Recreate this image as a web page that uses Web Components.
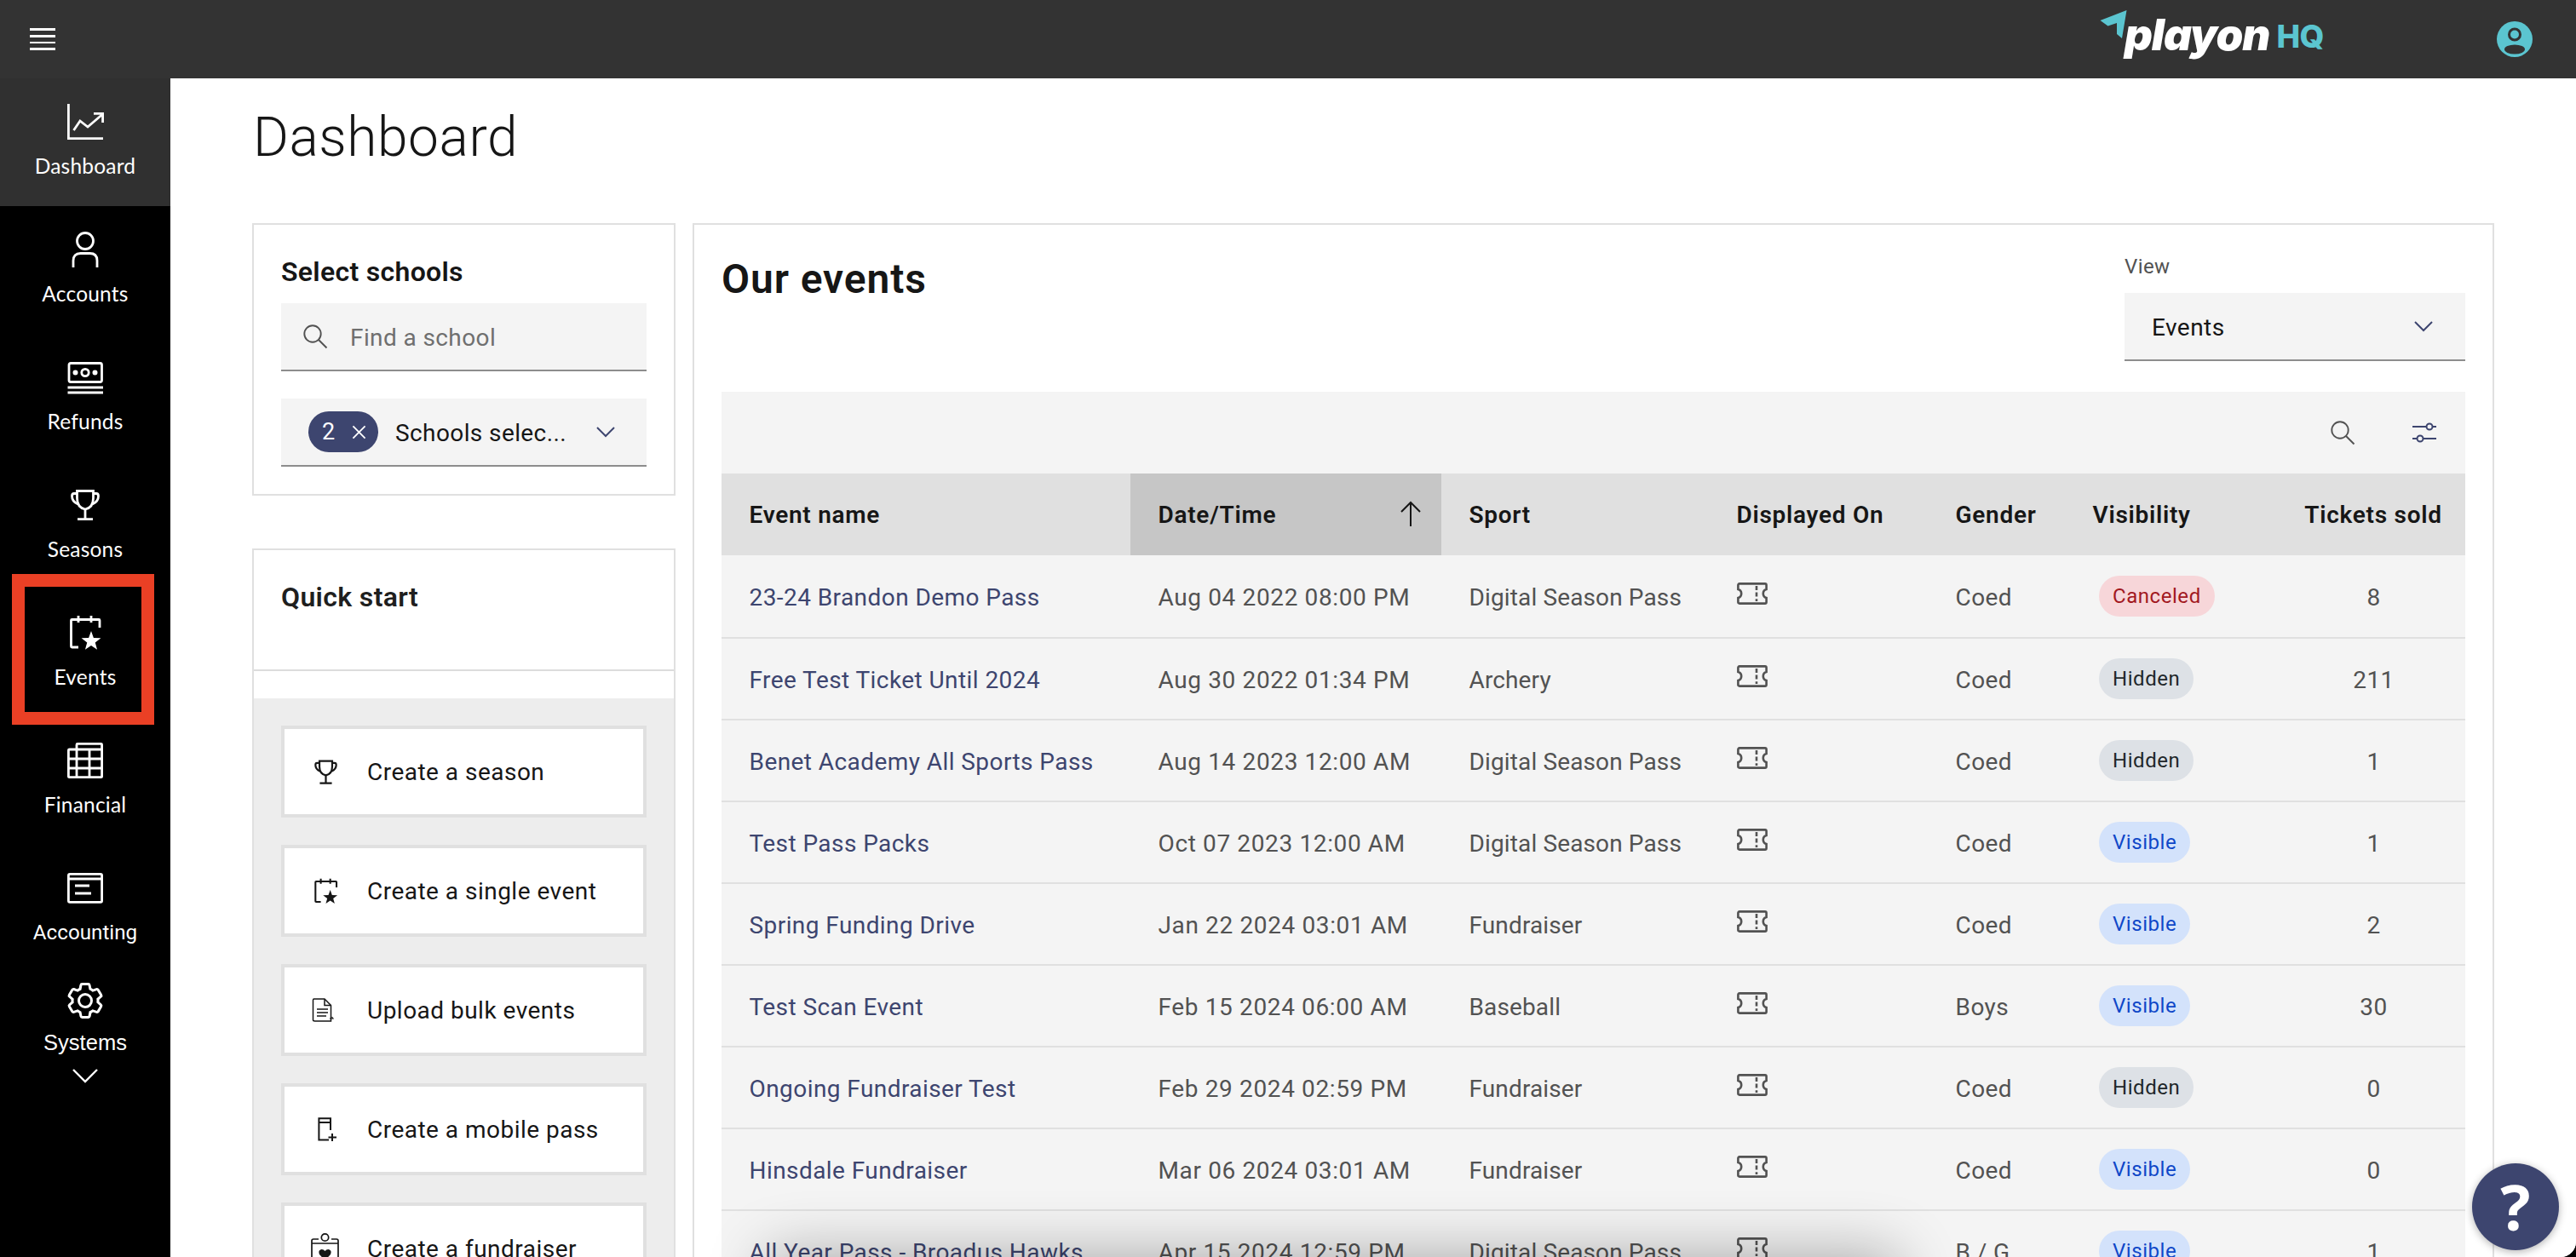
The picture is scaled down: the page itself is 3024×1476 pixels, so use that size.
<!DOCTYPE html>
<html lang="en"><head><meta charset="utf-8"><title>Dashboard</title>
<style>
html,body{margin:0;padding:0;background:#000;height:1476px;overflow:hidden}
</style></head>
<body>
<app-shell>
  <top-bar slot="top"></top-bar>
  <side-nav slot="side">
    <nav-item icon="chart" active>Dashboard</nav-item>
    <nav-item icon="user">Accounts</nav-item>
    <nav-item icon="money">Refunds</nav-item>
    <nav-item icon="trophy">Seasons</nav-item>
    <nav-item icon="event">Events</nav-item>
    <nav-item icon="table">Financial</nav-item>
    <nav-item icon="ledger" face="Roboto" fs="24.2">Accounting</nav-item>
    <nav-item icon="gear" expand face="Liberation Sans" fs="25.5">Systems</nav-item>
  </side-nav>
  <dash-board>
    <schools-card slot="left"></schools-card>
    <quick-start slot="left">
      <quick-button icon="trophy" size="33">Create a season</quick-button>
      <quick-button icon="event" size="31">Create a single event</quick-button>
      <quick-button icon="doc" size="28" shift="-2">Upload bulk events</quick-button>
      <quick-button icon="pass" size="28">Create a mobile pass</quick-button>
      <quick-button icon="fund" size="36">Create a fundraiser</quick-button>
    </quick-start>
    <events-card slot="right">
      <event-row><a>23-24 Brandon Demo Pass</a><span>Aug 04 2022 08:00 PM</span><span>Digital Season Pass</span><x-icon name="ticket" size="36"></x-icon><span>Coed</span><status-tag kind="red">Canceled</status-tag><span>8</span></event-row>
      <event-row><a>Free Test Ticket Until 2024</a><span>Aug 30 2022 01:34 PM</span><span>Archery</span><x-icon name="ticket" size="36"></x-icon><span>Coed</span><status-tag kind="gray">Hidden</status-tag><span>211</span></event-row>
      <event-row><a>Benet Academy All Sports Pass</a><span>Aug 14 2023 12:00 AM</span><span>Digital Season Pass</span><x-icon name="ticket" size="36"></x-icon><span>Coed</span><status-tag kind="gray">Hidden</status-tag><span>1</span></event-row>
      <event-row><a>Test Pass Packs</a><span>Oct 07 2023 12:00 AM</span><span>Digital Season Pass</span><x-icon name="ticket" size="36"></x-icon><span>Coed</span><status-tag kind="blue">Visible</status-tag><span>1</span></event-row>
      <event-row><a>Spring Funding Drive</a><span>Jan 22 2024 03:01 AM</span><span>Fundraiser</span><x-icon name="ticket" size="36"></x-icon><span>Coed</span><status-tag kind="blue">Visible</status-tag><span>2</span></event-row>
      <event-row><a>Test Scan Event</a><span>Feb 15 2024 06:00 AM</span><span>Baseball</span><x-icon name="ticket" size="36"></x-icon><span>Boys</span><status-tag kind="blue">Visible</status-tag><span>30</span></event-row>
      <event-row><a>Ongoing Fundraiser Test</a><span>Feb 29 2024 02:59 PM</span><span>Fundraiser</span><x-icon name="ticket" size="36"></x-icon><span>Coed</span><status-tag kind="gray">Hidden</status-tag><span>0</span></event-row>
      <event-row><a>Hinsdale Fundraiser</a><span>Mar 06 2024 03:01 AM</span><span>Fundraiser</span><x-icon name="ticket" size="36"></x-icon><span>Coed</span><status-tag kind="blue">Visible</status-tag><span>0</span></event-row>
      <event-row><a>All Year Pass - Broadus Hawks</a><span>Apr 15 2024 12:59 PM</span><span>Digital Season Pass</span><x-icon name="ticket" size="36"></x-icon><span>B / G</span><status-tag kind="blue">Visible</status-tag><span>1</span></event-row>
    </events-card>
  </dash-board>
  <help-button slot="float"></help-button>
</app-shell>
<script>
const NAVY='#3d456f', SANS='Roboto, "Liberation Sans", sans-serif';
const ICONS={
 chart:[42,'<path d="M1.4 0V40.6H42M7.5 31L15 20L24 27L41 12.5M31 11.4H41.6V22"/>'],
 user:[42,'<circle cx="21" cy="11" r="9.5"/><path d="M7 42V34Q7 25.5 15.5 25.5H26.5Q35 25.5 35 34V42"/>'],
 money:[42,'<rect x="2" y="4.5" width="38.5" height="22" rx="2"/><circle cx="21" cy="15.5" r="4.2"/><circle cx="9.5" cy="15.5" r="1.6" fill="currentColor"/><circle cx="32.5" cy="15.5" r="1.6" fill="currentColor"/><path d="M0.5 33H42M0.5 39H42"/>'],
 trophy:[42,'<path d="M11.5 4.5H30.5V13Q30.5 24 21 26Q11.5 24 11.5 13Z"/><path d="M11.5 7.5H8Q5.5 7.5 5.5 10.5Q5.5 17 12.5 20M30.5 7.5H34Q36.5 7.5 36.5 10.5Q36.5 17 29.5 20M21 26V37M12 37.6H30"/>'],
 event:[42,'<path d="M13 38H5.5Q4.5 38 4.5 37V6.5Q4.5 5.5 5.5 5.5H37Q38 5.5 38 6.5V15M13 1V9M28 1V9"/><polygon points="28,19 30.9,27 39.4,27.3 32.75,32.5 35.05,40.7 28,36 20.95,40.7 23.25,32.5 16.6,27.3 25.1,27" fill="currentColor" stroke="none"/>'],
 table:[42,'<path d="M11 8V2.4Q11 1.4 12 1.4H39.5Q40.6 1.4 40.6 2.4V39.5Q40.6 40.6 39.5 40.6H2.5Q1.4 40.6 1.4 39.5V9Q1.4 8 2.5 8H40.6M1.4 19H40.6M1.4 30H40.6M11 8V40.6M26 8V40.6"/>'],
 ledger:[42,'<rect x="1.4" y="4.4" width="39.2" height="33" rx="1.6"/><path d="M1.4 10H40.6M9 18H26M9 27H28"/>'],
 gear:[32,'<path fill="currentColor" stroke="none" d="M27,16.76c0-.25,0-.5,0-.76s0-.51,0-.77l1.92-1.68A2,2,0,0,0,29.3,11L26.94,7a2,2,0,0,0-1.73-1,2,2,0,0,0-.64.1l-2.43.82a11.35,11.35,0,0,0-1.31-.75l-.51-2.52a2,2,0,0,0-2-1.61H13.64a2,2,0,0,0-2,1.61l-.51,2.52a11.48,11.48,0,0,0-1.32.75L7.43,6.06A2,2,0,0,0,6.79,6,2,2,0,0,0,5.06,7L2.7,11a2,2,0,0,0,.41,2.51L5,15.24c0,.25,0,.5,0,.76s0,.51,0,.77L3.11,18.45A2,2,0,0,0,2.7,21L5.06,25a2,2,0,0,0,1.73,1,2,2,0,0,0,.64-.1l2.43-.82a11.35,11.35,0,0,0,1.31.75l.51,2.52a2,2,0,0,0,2,1.61h4.72a2,2,0,0,0,2-1.61l.51-2.52a11.48,11.48,0,0,0,1.32-.75l2.43.82a2,2,0,0,0,.64.1,2,2,0,0,0,1.73-1L29.3,21a2,2,0,0,0-.41-2.51ZM25.21,24l-3.43-1.16a8.86,8.86,0,0,1-2.71,1.57L18.36,28H13.64l-.71-3.55a9.36,9.36,0,0,1-2.7-1.57L6.79,24,4.43,20l2.72-2.4a8.9,8.9,0,0,1,0-3.13L4.43,12,6.79,8l3.43,1.16a8.86,8.86,0,0,1,2.71-1.57L13.64,4h4.72l.71,3.55a9.36,9.36,0,0,1,2.7,1.57L25.21,8,27.57,12l-2.72,2.4a8.9,8.9,0,0,1,0,3.13L27.57,20Z"/><path fill="currentColor" stroke="none" d="M16,22a6,6,0,1,1,6-6A5.94,5.94,0,0,1,16,22Zm0-10a3.91,3.91,0,0,0-4,4,3.91,3.91,0,0,0,4,4,3.91,3.91,0,0,0,4-4A3.91,3.91,0,0,0,16,12Z"/>'],
 chevron:[30,'<path d="M1 1L15 15L29 1" stroke-width="2.4"/>','0 0 30 17'],
 chev:[22,'<path d="M1 1L11 11L21 1" stroke-width="2"/>','0 0 22 12'],
 search:[28,'<circle cx="11" cy="11" r="9.7" stroke-width="1.9"/><path d="M18 18L27.5 27.5" stroke-width="1.9"/>'],
 close:[18,'<path d="M1.5 1.5L16.5 16.5M16.5 1.5L1.5 16.5" stroke-width="1.9"/>'],
 sliders:[28,'<path d="M0 7H16.5M23.5 7H28M0 21H5.5M12.5 21H28" stroke-width="2.2"/><circle cx="20" cy="7" r="3.5" stroke-width="2"/><circle cx="9" cy="21" r="3.5" stroke-width="2"/>'],
 arrow:[26,'<path d="M13 30V2M2 13L13 2L24 13" stroke-width="2"/>','0 0 26 32'],
 ticket:[36,'<path d="M3 1.4H33Q34.6 1.4 34.6 3V8Q30.8 9 30.8 13T34.6 18V23Q34.6 24.6 33 24.6H3Q1.4 24.6 1.4 23V18Q5.2 17 5.2 13T1.4 8V3Q1.4 1.4 3 1.4Z" stroke-width="2.6"/><path d="M23 4V22" stroke-width="2.6" stroke-dasharray="5 2.6"/>','0 0 36 26'],
 doc:[28,'<path d="M2.5 1H15L22.5 8.5V27H3.5Q1.5 27 1.5 25.5V2.5Q1.5 1 2.5 1Z" stroke-width="1.5"/><path d="M15 1V8.5H22.5M6 13H19M6 17H19M6 21H17" stroke-width="1.5"/><path d="M21 24H25L23.5 22" stroke-width="1.2"/>'],
 pass:[28,'<path d="M20 15V1.2H6.4V26.5H18M6.4 6H20M22 19V28M17.5 23.5H27" stroke-width="2"/>'],
 fund:[36,'<path d="M10 7H4Q2 7 2 9V36H33V9Q33 7 31 7H25M2 12H33" stroke-width="1.7"/><circle cx="17.5" cy="5" r="4.2" stroke-width="1.7"/><path d="M17.5 32L11 25Q9 20 13.5 19Q16 19 17.5 21Q19 19 21.5 19Q26 20 24 25Z" fill="currentColor" stroke="none"/>']
};
function define(name,html,init){
  customElements.define(name,class extends HTMLElement{
    constructor(){super();this.attachShadow({mode:'open'}).innerHTML=typeof html==='function'?html(this):html;}
    connectedCallback(){ if(init) init(this); }
  });
}
customElements.define('x-icon',class extends HTMLElement{
  connectedCallback(){
    const ic=ICONS[this.getAttribute('name')], s=+this.getAttribute('size')||ic[0];
    const vb=ic[2]||`0 0 ${ic[0]} ${ic[0]}`, [,,w,h]=vb.split(' ').map(Number);
    const r=this.shadowRoot||this.attachShadow({mode:'open'});
    r.innerHTML=`<style>:host{display:inline-flex;flex:none;line-height:0}svg{display:block;overflow:visible}</style>
    <svg width="${s}" height="${s*h/w}" viewBox="${vb}" fill="none" stroke="currentColor" stroke-width="2.8">${ic[1]}</svg>`;
  }
});
define('app-shell',`<style>
:host{display:grid;grid-template-columns:200px 1fr;grid-template-rows:92px 1384px;width:3024px;height:1476px;overflow:hidden;position:relative;background:#fff;border-bottom-right-radius:18px;font-family:${SANS}}
.top{grid-column:1/3}
.sh{position:absolute;left:930px;width:1270px;top:1500px;height:80px;box-shadow:0 0 70px 28px rgba(0,0,0,.3);pointer-events:none}
</style><slot name="top" class="top"></slot><slot name="side"></slot><slot></slot><div class="sh"></div><slot name="float"></slot>`);
define('top-bar',`<style>
:host{display:flex;grid-column:1/3;align-items:center;height:92px;background:#333;box-sizing:border-box;padding:0 51px 0 35px;color:#fff}
.ham{display:flex;flex-direction:column;gap:5px;width:30px}
.ham i{display:block;height:2.6px;background:#fff}
.logo{margin-left:auto;display:flex;align-items:flex-start;height:92px;margin-right:203px;position:relative}
.plane{margin-top:12px}
.play{font:italic 900 51px/1 Inter,sans-serif;letter-spacing:-1px;color:#fff;margin-left:-3px;margin-top:15px}
.hq{font:800 37px/1 Inter,sans-serif;color:#5bc5d0;margin-left:8px;margin-top:24px;letter-spacing:-.5px}
</style>
<div class="ham"><i></i><i></i><i></i><i></i></div>
<div class="logo">
<svg class="plane" width="32" height="34" viewBox="0 0 32 34"><polygon points="31.5,0 0.5,12 9.5,18.5 20,15 20,28 26,33" fill="#5bc5d0"/></svg>
<span class="play">playon</span><span class="hq">HQ</span></div>
<svg width="42" height="42" viewBox="0 0 42 42"><circle cx="21" cy="21" r="21" fill="#5bc5d0"/><circle cx="21" cy="15.5" r="6.5" fill="none" stroke="#333" stroke-width="3"/><ellipse cx="21" cy="33" rx="12" ry="5.5" fill="#333"/></svg>`);
define('side-nav',`<style>
:host{display:flex;flex-direction:column;width:200px;background:#000;color:#fff;position:relative;height:1384px}
.mark{position:absolute;left:14px;top:582px;width:167px;height:177px;box-sizing:border-box;border:15px solid #ea4025;pointer-events:none}
</style><slot></slot><div class="mark"></div>`);
customElements.define('nav-item',class extends HTMLElement{
  connectedCallback(){
    const exp=this.hasAttribute('expand'), face=this.getAttribute('face')||'Lato', fs=this.getAttribute('fs')||'24.5';
    const name=this.getAttribute('icon');
    (this.shadowRoot||this.attachShadow({mode:'open'})).innerHTML=`<style>
    :host{display:flex;flex-direction:column;align-items:center;height:150px;box-sizing:border-box;padding-top:${exp?12:30}px;background:${this.hasAttribute('active')?'#303030':'transparent'};color:#fff}
    .ic{height:42px;width:48px;display:flex;align-items:center;justify-content:center}
    .l{font:400 ${fs}px/32px "${face}",sans-serif;margin-top:${exp?12:15}px;letter-spacing:${face=='Lato'?'.2px':'0'}}
    .c{margin-top:15px}
    </style><div class="ic"><x-icon name="${name}" size="${name=='gear'?48:42}"></x-icon></div><div class="l"><slot></slot></div>${exp?'<div class="c"><x-icon name="chevron" size="30"></x-icon></div>':''}`;
  }
});
define('dash-board',`<style>
:host{display:block;background:#fff;padding:0 96px;height:1384px;overflow:hidden;box-sizing:border-box}
h1{margin:0;height:170px;box-sizing:border-box;padding-top:32px;font:300 64px/76px ${SANS};letter-spacing:.55px;color:#161616;padding-left:1px}
.cols{display:grid;grid-template-columns:497px 2115px;column-gap:20px;align-items:start}
.left{display:flex;flex-direction:column;gap:62px}
</style><h1>Dashboard</h1><div class="cols"><div class="left"><slot name="left"></slot></div><div><slot name="right"></slot></div></div>`);
define('schools-card',`<style>
:host{display:block;height:320px;box-sizing:border-box;border:2px solid #e0e0e0;padding:32px 32px 0;background:#fff}
h2{margin:0 0 14px;font:600 32px/46px ${SANS};color:#161616;letter-spacing:.3px}
.f{height:80px;box-sizing:border-box;background:#f4f4f4;border-bottom:2px solid #8d8d8d;display:flex;align-items:center;font:400 28px/1 ${SANS};letter-spacing:.4px}
.f>span{padding-top:3px}
.s{padding-left:26px;color:#6f6f6f;margin-bottom:32px}
.s x-icon{color:#525252;margin-right:27px}
.m{padding-left:32px;color:#161616}
.tag{width:82px;height:48px;border-radius:24px;background:${NAVY};color:#fff;display:flex;align-items:center;box-sizing:border-box;padding-left:16px;margin-right:20px;font-size:27px}
.tag x-icon{margin-left:19px}
.m>x-icon{color:${NAVY};margin-left:35px}
</style><h2>Select schools</h2>
<div class="f s"><x-icon name="search"></x-icon><span>Find a school</span></div>
<div class="f m"><div class="tag"><span>2</span><x-icon name="close" size="17"></x-icon></div><span>Schools selec...</span><x-icon name="chev"></x-icon></div>`);
define('quick-start',`<style>
:host{display:block;border:2px solid #e0e0e0;border-bottom:0;background:#fff;height:900px}
.h{height:142px;box-sizing:border-box;padding:32px 32px 0;border-bottom:2px solid #dcdcdc}
h2{margin:0;font:600 32px/46px ${SANS};color:#1f1f1f;letter-spacing:.35px}
.p{margin-top:32px;background:#ededed;padding:32px;display:flex;flex-direction:column;gap:32px;height:100%}
</style><div class="h"><h2>Quick start</h2></div><div class="p"><slot></slot></div>`);
customElements.define('quick-button',class extends HTMLElement{
  connectedCallback(){
    const sh=this.getAttribute('shift')||0;
    (this.shadowRoot||this.attachShadow({mode:'open'})).innerHTML=`<style>
    :host{display:flex;align-items:center;height:108px;flex:none;box-sizing:border-box;border:4px solid #e0e0e0;background:#fff;color:#161616;font:400 28px/1 ${SANS};letter-spacing:.48px}
    .i{width:52px;margin-left:${22+ +sh}px;margin-right:${23- +sh}px;display:flex;justify-content:center;color:#161616}
    .t{padding-top:2px}
    </style><div class="i"><x-icon name="${this.getAttribute('icon')}" size="${this.getAttribute('size')}"></x-icon></div><div class="t"><slot></slot></div>`;
  }
});
define('events-card',`<style>
:host{display:block;border:2px solid #e0e0e0;background:#fff;padding:0 32px;height:1400px;box-sizing:border-box;
 --cols:480px 365px 314px 257px 161px 252px 218px}
.head{display:flex;justify-content:space-between;height:196px;box-sizing:border-box;padding-top:34px}
h2{margin:0;font:600 48px/60px ${SANS};letter-spacing:.9px;color:#161616}
.v{width:400px;margin-top:-1px}
label{display:block;font:400 24px/32px ${SANS};letter-spacing:.4px;color:#525252;margin-bottom:15px}
.sel{height:80px;box-sizing:border-box;background:#f4f4f4;border-bottom:2px solid #8d8d8d;display:flex;align-items:center;justify-content:space-between;padding:0 38px 0 32px;font:400 28px/1 ${SANS};letter-spacing:.45px;color:#161616}
.sel span{padding-top:3px}
.sel x-icon{color:${NAVY}}
.tb{height:96px;background:#f4f4f4;display:flex;justify-content:flex-end;align-items:center;gap:68px;padding-right:34px}
.tb x-icon:first-child{color:#525252}.tb x-icon:last-child{color:${NAVY}}
.th{display:grid;grid-template-columns:var(--cols);height:96px;background:#e0e0e0;font:600 28px/96px ${SANS};letter-spacing:.72px;color:#161616}
.th div{padding-left:32.5px;padding-top:1px;white-space:nowrap;height:95px}
.th .sort{background:#c6c6c6;display:flex;justify-content:space-between;align-items:center;padding:0 23px 0 32.5px;height:96px}
.th .sort span{padding-top:2px}
.th .last{padding:1px 0 0 2px;text-align:center}
</style>
<div class="head"><h2>Our events</h2><div class="v"><label>View</label><div class="sel"><span>Events</span><x-icon name="chev"></x-icon></div></div></div>
<div class="tb"><x-icon name="search"></x-icon><x-icon name="sliders"></x-icon></div>
<div class="th"><div>Event name</div><div class="sort"><span>Date/Time</span><x-icon name="arrow"></x-icon></div><div>Sport</div><div>Displayed On</div><div>Gender</div><div>Visibility</div><div class="last">Tickets sold</div></div>
<slot></slot>`);
define('event-row',`<style>
:host{display:block;background:#f4f4f4;border-bottom:2px solid #e0e0e0;height:96px;box-sizing:border-box}
:host(:first-child){height:98px}
.g{display:grid;grid-template-columns:var(--cols);height:100%;align-items:center;font:400 28px/1 ${SANS};letter-spacing:.43px;color:#525252}
::slotted(*){margin-left:32.5px;white-space:nowrap}
::slotted(a),::slotted(span){margin-top:3px}
::slotted(a){color:${NAVY}}
::slotted(span:nth-child(2)){letter-spacing:.63px}
::slotted(span:nth-child(3)){letter-spacing:.13px}
::slotted(x-icon){margin-top:-7px;width:36px}
::slotted(status-tag){margin-left:40px}
::slotted(:last-child){margin-left:3px;text-align:center}
</style><div class="g"><slot></slot></div>`);
customElements.define('status-tag',class extends HTMLElement{
  connectedCallback(){
    const c={red:['#f7d6d9','#a2191f'],gray:['#dde1e6','#21272a'],blue:['#d3e2fb','#0f47c8']}[this.getAttribute('kind')];
    (this.shadowRoot||this.attachShadow({mode:'open'})).innerHTML=`<style>
    :host{display:inline-flex;align-items:center;justify-self:start;height:48px;border-radius:24px;padding:0 16px;background:${c[0]};color:${c[1]};font:400 24px/1 ${SANS};letter-spacing:.55px}
    </style><slot></slot>`;
  }
});
define('help-button',`<style>
:host{position:absolute;right:20px;bottom:8px;width:102px;height:102px;border-radius:50%;background:${NAVY};display:flex;align-items:center;justify-content:center;color:#fff;font:700 74px/1 "Open Sans",sans-serif;box-shadow:0 2px 10px rgba(0,0,0,.3)}
</style><span>?</span>`);
</script>
</body></html>
